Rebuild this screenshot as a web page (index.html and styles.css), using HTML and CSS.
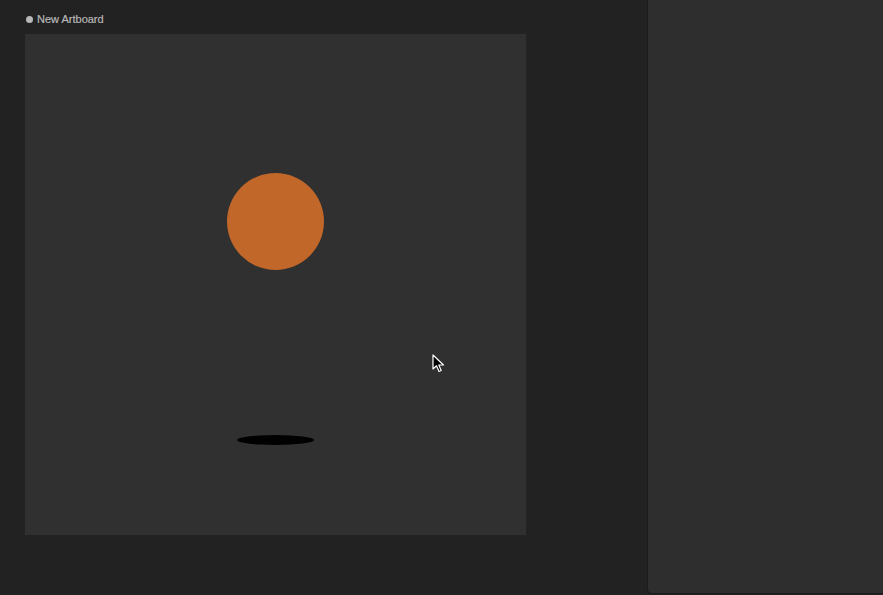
FILE: index.html
```html
<!DOCTYPE html>
<html>
<head>
<meta charset="utf-8">
<link rel="stylesheet" href="styles.css">
</head>
<body>
<div class="app">
  <div class="stage">
    <div class="label"><span class="dot"></span>New Artboard</div>
    <div class="artboard">
      <div class="ball"></div>
      <div class="shadow"></div>
      <svg class="cursor" width="14" height="20" viewBox="0 0 14 20">
        <path d="M1 1 L1 15 L4.5 11.8 L7 17.5 L9.2 16.5 L6.8 11 L11.5 11 Z" fill="#000" stroke="#fff" stroke-width="1.2" stroke-linejoin="round"/>
      </svg>
    </div>
  </div>
  <div class="panel"></div>
</div>
</body>
</html>
```
FILE: styles.css
```css
html, body {
  margin: 0;
  padding: 0;
  width: 883px;
  height: 595px;
  overflow: hidden;
  background: #222222;
  font-family: "Liberation Sans", Arial, sans-serif;
}
.app {
  display: flex;
  height: 595px;
}
.stage {
  width: 647px;
  padding: 12px 0 0 25px;
  box-sizing: border-box;
}
.label {
  display: flex;
  align-items: center;
  gap: 4px;
  height: 14px;
  margin-bottom: 8px;
  font-size: 11px;
  color: #b8b8b8;
  padding-left: 1px;
  -webkit-text-stroke: 0.2px #b8b8b8;
}
.dot {
  width: 7px;
  height: 7px;
  border-radius: 50%;
  background: #b8b8b8;
}
.artboard {
  position: relative;
  width: 501px;
  height: 501px;
  background: #303030;
}
.ball {
  position: absolute;
  left: 202px;
  top: 139px;
  width: 97px;
  height: 97px;
  border-radius: 50%;
  background: #c2672a;
}
.shadow {
  position: absolute;
  left: 212px;
  top: 401px;
  width: 77px;
  height: 10px;
  border-radius: 50%;
  background: #000;
}
.cursor {
  position: absolute;
  left: 407px;
  top: 320px;
}
.panel {
  width: 236px;
  height: 594px;
  background: #2e2e2e;
  border-left: 1px solid #1c1c1c;
  border-bottom: 1px solid #1c1c1c;
  border-bottom-left-radius: 5px;
  box-sizing: border-box;
}
```
